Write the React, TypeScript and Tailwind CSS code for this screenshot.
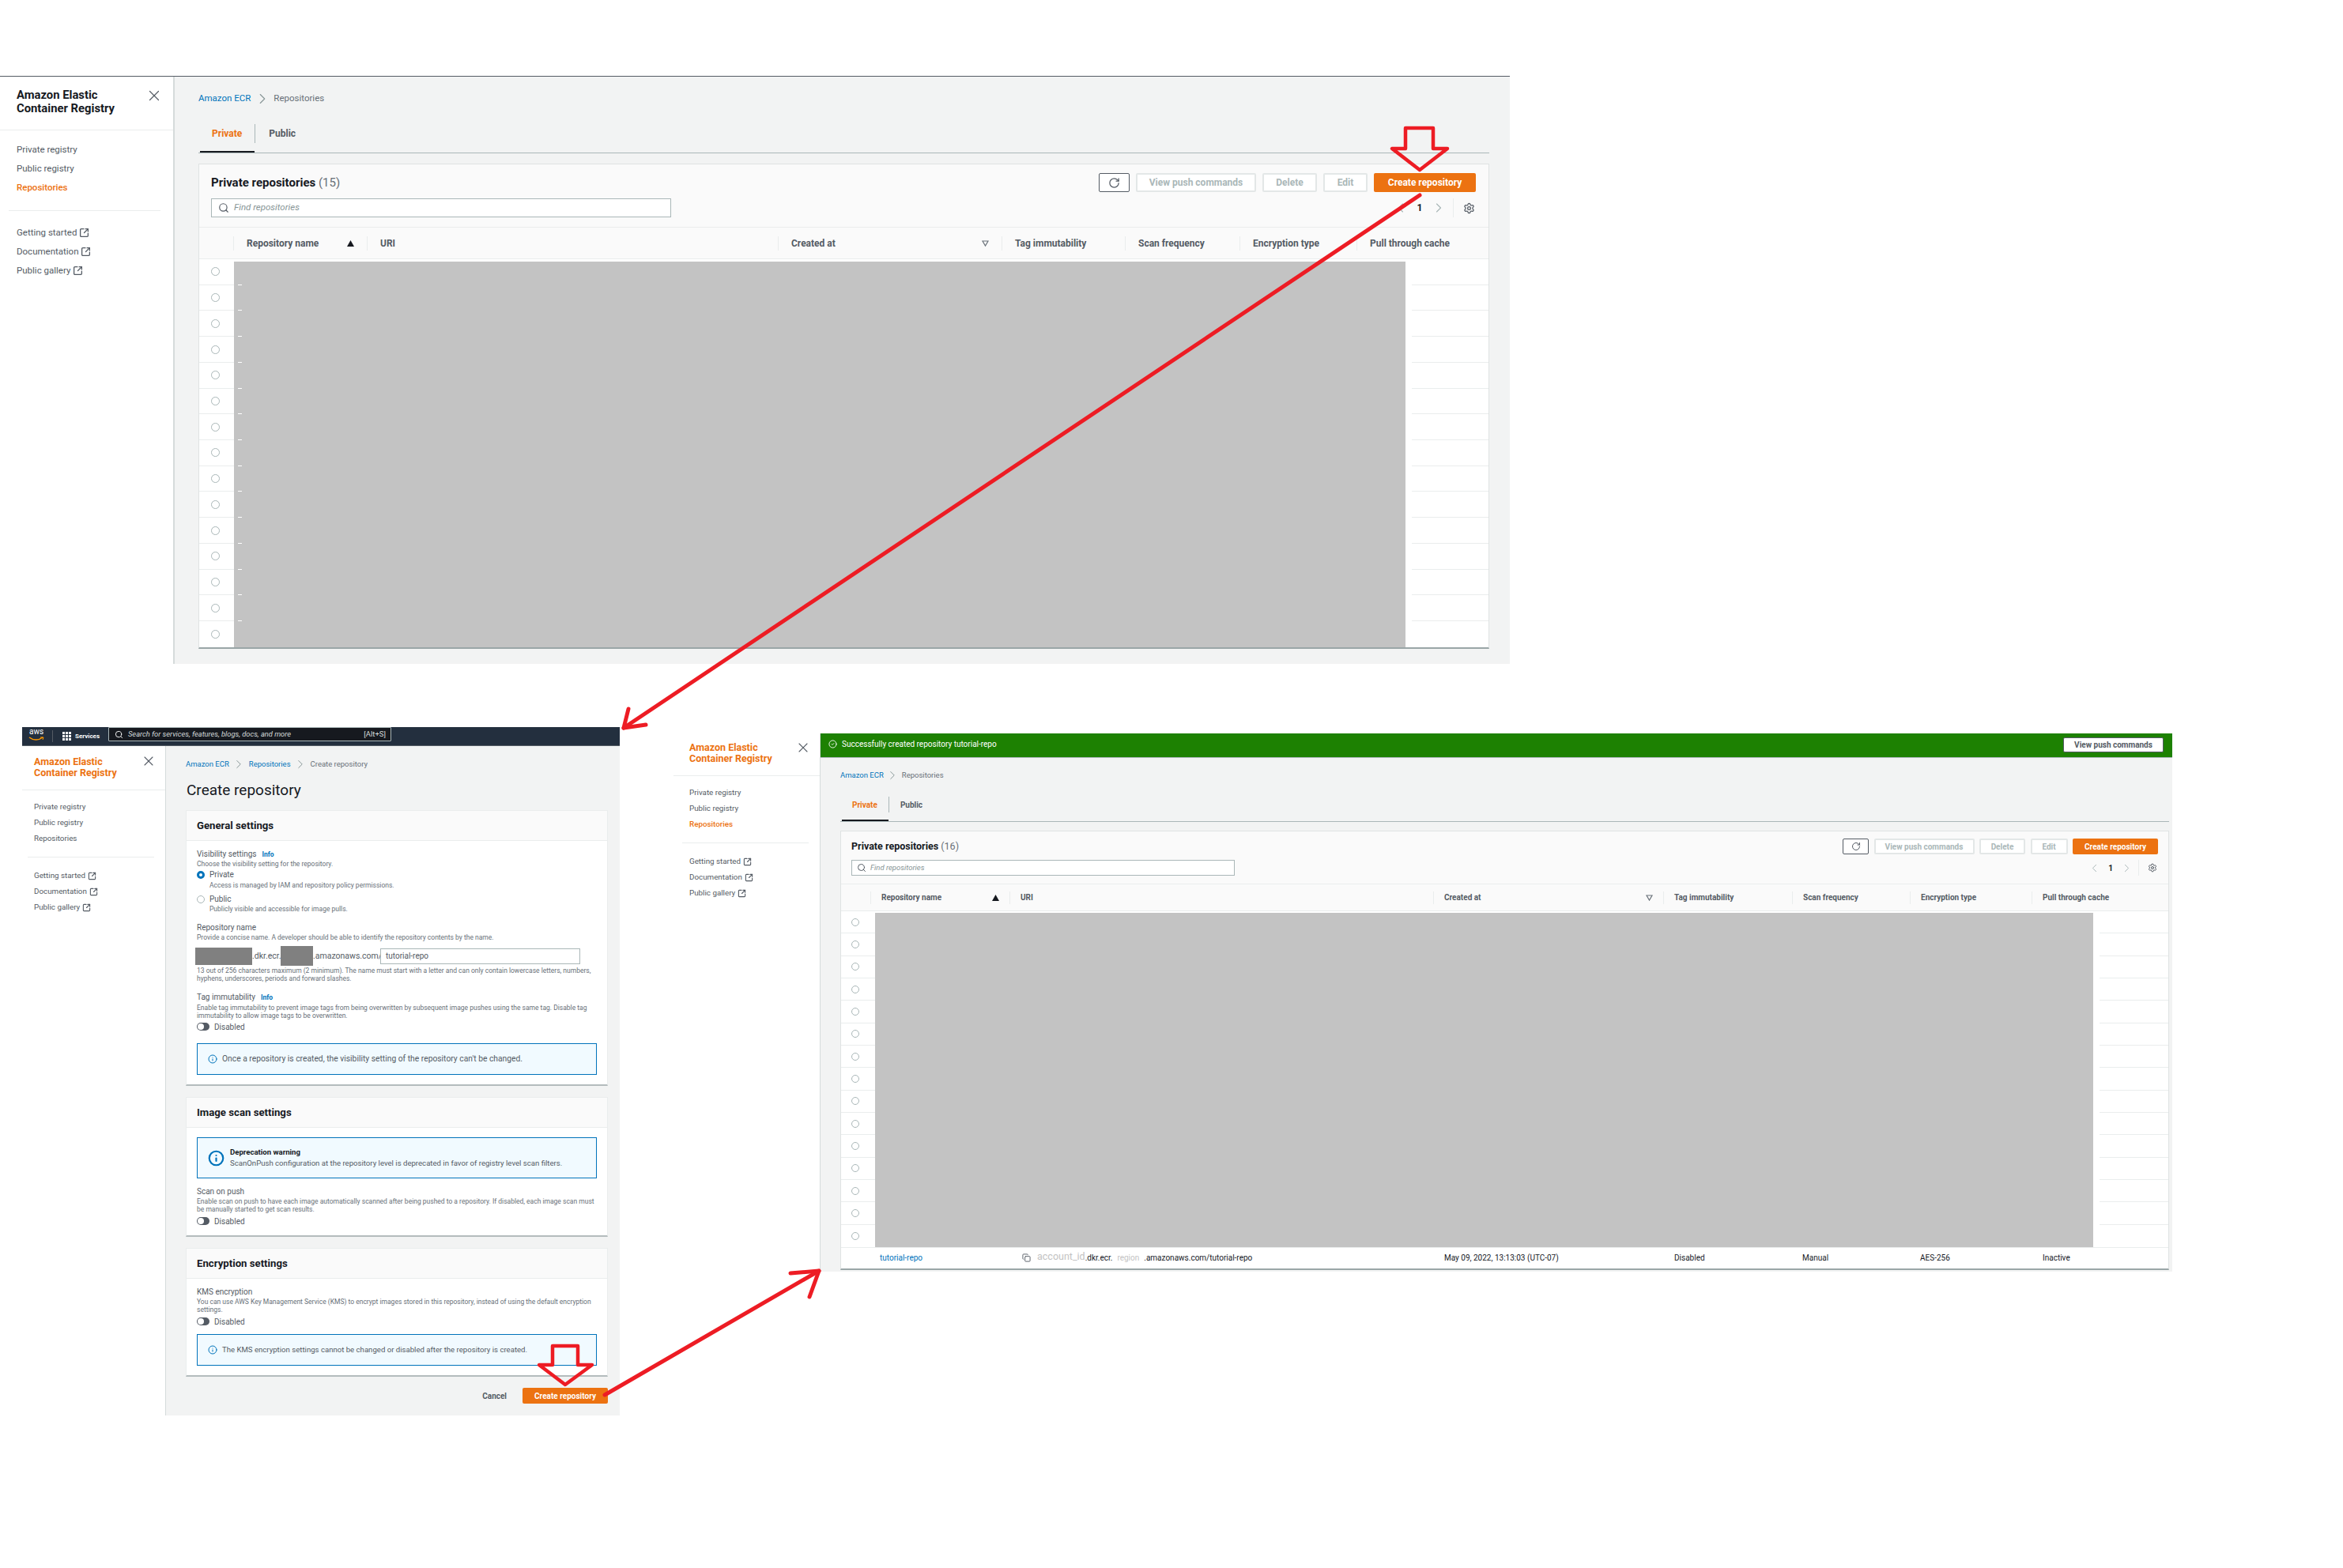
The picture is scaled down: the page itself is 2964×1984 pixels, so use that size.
import React from "react";
import clsx from "clsx";
import {
    ChevronLeft,
    ChevronRight,
    CircleCheck,
    Copy,
    Info,
    RotateCw,
    Search,
    Settings,
    SquareArrowOutUpRight,
    X,
} from "lucide-react";

type SidebarProps = {
    wrap: string;
    title: string;
    titleBlock: string;
    close: number;
    closeClass: string;
    navBlock: string;
    item: string;
    rule: string;
    linkBlock: string;
    icon: number;
    active: boolean;
};

const Sidebar = ({
    wrap,
    title,
    titleBlock,
    close,
    closeClass,
    navBlock,
    item,
    rule,
    linkBlock,
    icon,
    active,
}: SidebarProps) => {
    return (
        <div className={clsx("shrink-0", wrap)}>
            <div className={clsx("flex justify-between border-b border-[#eaeded]", titleBlock)}>
                <div className={clsx("font-bold", title)}>
                    <div>Amazon Elastic</div>
                    <div>Container Registry</div>
                </div>
                <X size={close} strokeWidth={1.3} className={clsx("text-[#545b64]", closeClass)} />
            </div>
            <div className={navBlock}>
                <div className={clsx("text-[#545b64]", item)}>Private registry</div>
                <div className={clsx("text-[#545b64]", item)}>Public registry</div>
                <div className={clsx(item, active ? "text-[#ec7211] font-medium" : "text-[#545b64]")}>Repositories</div>
            </div>
            <div className={clsx("h-px bg-[#eaeded]", rule)} />
            <div className={linkBlock}>
                {["Getting started", "Documentation", "Public gallery"].map((label) => (
                    <div key={label} className={clsx("flex items-center gap-[3px] text-[#545b64]", item)}>
                        {label}
                        <SquareArrowOutUpRight size={icon} strokeWidth={2.4} className="text-[#545b64]" />
                    </div>
                ))}
            </div>
        </div>
    );
};

type Column = { label: string; width: string; filter?: "asc" | "caret" };

type Variant = {
    head: string;
    title: string;
    search: string;
    searchIcon: number;
    searchText: string;
    btnRow: string;
    btn: string;
    widths: string[];
    pagerRow: string;
    pagerIcon: number;
    pagerOne: string;
    pagerPrev: string;
    pagerNext: string;
    pagerRule: string;
    pagerGear: string;
    gear: number;
    thead: string;
    firstCol: string;
    th: string;
    thRule: string;
    columns: Column[];
    leftCol: string;
    radioCell: string;
    row: string;
    radio: string;
    gray: string;
    grayInner: string;
    rightCol: string;
};

const bigVariant: Variant = {
    head: "pl-[15px] pr-[16px] pt-[11px] pb-[12px]",
    title: "text-[15px] leading-[24px]",
    search: "w-[582px] h-[24px] mt-[8px] pl-[8px] gap-[6px]",
    searchIcon: 14,
    searchText: "text-[11.5px]",
    btnRow: "gap-[8px] h-[24px]",
    btn: "text-[12px]",
    widths: ["w-[39px]", "w-[152px]", "w-[69px]", "w-[56px]", "w-[129px]"],
    pagerRow: "mt-[8px] h-[24px] pr-[1px]",
    pagerIcon: 20,
    pagerOne: "ml-[9px] w-[10px] text-[12px]",
    pagerPrev: "",
    pagerNext: "ml-[9px]",
    pagerRule: "ml-[8px] h-[24px]",
    pagerGear: "ml-[12px]",
    gear: 15,
    thead: "h-[40px]",
    firstCol: "w-[43px]",
    th: "h-[18px] pl-[16px] text-[12px]",
    thRule: "pr-[16px]",
    columns: [
        { label: "Repository name", width: "w-[169px]", filter: "asc" },
        { label: "URI", width: "w-[520px]" },
        { label: "Created at", width: "w-[283px]", filter: "caret" },
        { label: "Tag immutability", width: "w-[156px]" },
        { label: "Scan frequency", width: "w-[145px]" },
        { label: "Encryption type", width: "w-[148px]" },
        { label: "Pull through cache", width: "w-[167px]" },
    ],
    leftCol: "w-[44px]",
    radioCell: "pl-[15px]",
    row: "h-[32.73px]",
    radio: "size-[11px]",
    gray: "w-[1482px] mt-[3px]",
    grayInner: "-mt-[3px]",
    rightCol: "ml-[8px]",
};

const smallVariant: Variant = {
    head: "pl-[13px] pr-[13px] pt-[9px] pb-[10px]",
    title: "text-[12.5px] leading-[20px]",
    search: "w-[485px] h-[20px] mt-[7px] pl-[6px] gap-[5px]",
    searchIcon: 12,
    searchText: "text-[9.5px]",
    btnRow: "gap-[6.5px] h-[20px]",
    btn: "text-[10px]",
    widths: ["w-[33px]", "w-[127px]", "w-[58px]", "w-[47px]", "w-[108px]"],
    pagerRow: "mt-[7px] h-[20px] pr-[1px]",
    pagerIcon: 17,
    pagerOne: "ml-[8px] w-[8px] text-[10px]",
    pagerPrev: "",
    pagerNext: "ml-[8px]",
    pagerRule: "ml-[6px] h-[20px]",
    pagerGear: "ml-[11px]",
    gear: 12,
    thead: "h-[34px]",
    firstCol: "w-[37px]",
    th: "h-[16px] pl-[13px] text-[10px]",
    thRule: "pr-[13px]",
    columns: [
        { label: "Repository name", width: "w-[176px]", filter: "asc" },
        { label: "URI", width: "w-[536px]" },
        { label: "Created at", width: "w-[291px]", filter: "caret" },
        { label: "Tag immutability", width: "w-[163px]" },
        { label: "Scan frequency", width: "w-[149px]" },
        { label: "Encryption type", width: "w-[154px]" },
        { label: "Pull through cache", width: "w-[172px]" },
    ],
    leftCol: "w-[43px]",
    radioCell: "pl-[13px]",
    row: "h-[28.33px]",
    radio: "size-[10px]",
    gray: "w-[1541px] mt-[2px]",
    grayInner: "-mt-[2px]",
    rightCol: "ml-[8px]",
};

const Radio = ({ className }: { className: string }) => (
    <div className={clsx("rounded-full border border-[#aab7b8] bg-white shrink-0", className)} />
);

const rowKeys = Array.from({ length: 15 }, (_, i) => i);

const RepoPanel = ({
    v,
    count,
    ticks,
    lastRow,
}: {
    v: Variant;
    count: number;
    ticks?: boolean;
    lastRow?: React.ReactNode;
}) => {
    const labels = ["", "View push commands", "Delete", "Edit"];

    return (
        <div className="border-x border-t border-[#dfe3e3] border-b-2 border-b-[#9aa6a7] bg-white">
            <div className={clsx("flex justify-between bg-[#fafafa] border-b border-[#eaeded]", v.head)}>
                <div>
                    <div className={clsx("font-bold text-[#16191f]", v.title)}>
                        Private repositories <span className="font-normal text-[#687078]">({count})</span>
                    </div>
                    <div className={clsx("flex items-center bg-white border border-[#aab7b8]", v.search)}>
                        <Search size={v.searchIcon} className="text-[#545b64]" />
                        <span className={clsx("italic text-[#879596]", v.searchText)}>Find repositories</span>
                    </div>
                </div>
                <div>
                    <div className={clsx("flex items-stretch", v.btnRow)}>
                        {labels.map((label, i) => (
                            <div
                                key={i}
                                className={clsx(
                                    "flex items-center justify-center bg-white rounded-[2px] font-bold",
                                    v.btn,
                                    v.widths[i],
                                    i === 0 ? "border border-[#545b64] text-[#545b64]" : "border-2 border-[#e3e7e7] text-[#aab7b8]"
                                )}
                            >
                                {i === 0 ? <RotateCw size={v.gear} /> : label}
                            </div>
                        ))}
                        <div className={clsx("flex items-center justify-center bg-[#ec7211] rounded-[2px] font-bold text-white", v.btn, v.widths[4])}>
                            Create repository
                        </div>
                    </div>
                    <div className={clsx("flex items-center justify-end", v.pagerRow)}>
                        <ChevronLeft size={v.pagerIcon} strokeWidth={1.4} className={clsx("text-[#aab7b8]", v.pagerPrev)} />
                        <span className={clsx("text-center font-bold text-[#16191f]", v.pagerOne)}>1</span>
                        <ChevronRight size={v.pagerIcon} strokeWidth={1.4} className={clsx("text-[#aab7b8]", v.pagerNext)} />
                        <div className={clsx("w-px bg-[#eaeded]", v.pagerRule)} />
                        <Settings size={v.gear} className={clsx("text-[#545b64]", v.pagerGear)} />
                    </div>
                </div>
            </div>
            <div className={clsx("flex items-center bg-[#fafafa] border-b border-[#eaeded]", v.thead)}>
                <div className={v.firstCol} />
                {v.columns.map((col) => (
                    <div
                        key={col.label}
                        className={clsx(
                            "flex items-center justify-between border-l border-[#eaeded] font-bold text-[#545b64] shrink-0",
                            col.width,
                            v.th,
                            col.filter && v.thRule
                        )}
                    >
                        {col.label}
                        {col.filter === "asc" && (
                            <svg width="9" height="8" viewBox="0 0 9 8">
                                <path d="M4.5 0 9 8H0z" fill="#16191f" />
                            </svg>
                        )}
                        {col.filter === "caret" && (
                            <svg width="9" height="8" viewBox="0 0 9 8">
                                <path d="M1 1h7L4.5 7z" fill="none" stroke="#687078" strokeWidth="1.2" />
                            </svg>
                        )}
                    </div>
                ))}
            </div>
            <div className="flex">
                <div className={clsx("shrink-0", v.leftCol)}>
                    {rowKeys.map((i) => (
                        <div key={i} className={clsx("flex items-center border-b border-[#eaeded] last:border-b-0", v.radioCell, v.row)}>
                            <Radio className={v.radio} />
                        </div>
                    ))}
                </div>
                <div className={clsx("shrink-0 bg-[#c3c3c3]", v.gray)}>
                    {ticks && (
                        <div className={v.grayInner}>
                            {rowKeys.map((i) => (
                                <div key={i} className={clsx("flex items-end pl-[5px]", v.row)}>
                                    {i < 14 && <div className="w-[5px] h-px bg-white" />}
                                </div>
                            ))}
                        </div>
                    )}
                </div>
                <div className={clsx("flex-1", v.rightCol)}>
                    {rowKeys.map((i) => (
                        <div key={i} className={clsx("border-b border-[#eaeded] last:border-b-0", v.row)} />
                    ))}
                </div>
            </div>
            {lastRow}
        </div>
    );
};

const Toggle = ({ className }: { className?: string }) => (
    <div className={clsx("flex items-center gap-[6px] h-[12px] text-[10px] text-[#545b64]", className)}>
        <div className="w-[16px] h-[10px] rounded-full bg-[#545b64] flex items-center pl-[1px]">
            <div className="size-[8px] rounded-full bg-white" />
        </div>
        Disabled
    </div>
);

const Note = ({ children, className }: { children: React.ReactNode; className: string }) => (
    <div className={clsx("border border-[#0073bb] bg-[#f1faff]", className)}>{children}</div>
);

const FormCard = ({ title, body, children }: { title: string; body: string; children: React.ReactNode }) => (
    <div className="border-x border-t border-[#eaeded] border-b-2 border-b-[#b4bcbd] bg-white">
        <div className="h-[38px] flex items-center pl-[13px] bg-[#fafafa] border-b border-[#eaeded] text-[13.2px] font-bold text-[#16191f]">
            {title}
        </div>
        <div className={body}>{children}</div>
    </div>
);

const labelText = "h-[12px] leading-[12px] text-[10px] text-[#545b64]";
const hintText = "leading-[10px] text-[8.5px] text-[#687078]";

const CreateForm = () => (
    <div className="flex-1 bg-[#f2f3f3] border-l border-[#d5dbdb] pl-[25px] pr-[15px] pt-[16px] pb-[15px]">
        <div className="flex items-center h-[14px] text-[9.5px]">
            <span className="text-[#0073bb]">Amazon ECR</span>
            <ChevronRight size={18} strokeWidth={1.3} className="mx-[3.5px] text-[#879596]" />
            <span className="text-[#0073bb]">Repositories</span>
            <ChevronRight size={18} strokeWidth={1.3} className="mx-[3.5px] text-[#879596]" />
            <span className="text-[#687078]">Create repository</span>
        </div>
        <div className="mt-[12px] pl-[1px] h-[28px] leading-[28px] text-[19px] text-[#16191f]">Create repository</div>
        <div className="mt-[11px] flex flex-col gap-[14px]">
            <FormCard title="General settings" body="px-[13px] pt-[11px] pb-[12px]">
                <div className={clsx("flex items-center gap-[7px]", labelText)}>
                    Visibility settings
                    <span className="text-[8.5px] font-bold text-[#0073bb]">Info</span>
                </div>
                <div className={clsx("mt-[1px]", hintText)}>Choose the visibility setting for the repository.</div>
                <div className={clsx("mt-[3px] flex items-center gap-[6px]", labelText)}>
                    <div className="size-[10px] rounded-full border-[3px] border-[#0073bb] bg-white" />
                    Private
                </div>
                <div className={clsx("mt-[2px] pl-[16px]", hintText)}>Access is managed by IAM and repository policy permissions.</div>
                <div className={clsx("mt-[7px] flex items-center gap-[6px]", labelText)}>
                    <Radio className="size-[10px]" />
                    Public
                </div>
                <div className={clsx("mt-[1px] pl-[16px]", hintText)}>Publicly visible and accessible for image pulls.</div>
                <div className={clsx("mt-[13px]", labelText)}>Repository name</div>
                <div className={clsx("mt-[1px]", hintText)}>Provide a concise name. A developer should be able to identify the repository contents by the name.</div>
                <div className="mt-[6px] h-[25px] -ml-[2px] flex items-center text-[10.5px] text-[#545b64] whitespace-nowrap">
                    <div className="w-[72px] h-[22px] bg-[#808080]" />
                    <span className="w-[36px] text-center">.dkr.ecr.</span>
                    <div className="w-[41px] h-[25px] bg-[#808080]" />
                    <span className="w-[85px] text-center">.amazonaws.com/</span>
                    <div className="w-[253px] h-[20px] flex items-center pl-[6px] bg-white border border-[#aab7b8] text-[10px]">tutorial-repo</div>
                </div>
                <div className={clsx("mt-[1px]", hintText)}>
                    13 out of 256 characters maximum (2 minimum). The name must start with a letter and can only contain lowercase letters, numbers, hyphens, underscores, periods and forward slashes.
                </div>
                <div className={clsx("mt-[13px] flex items-center gap-[7px]", labelText)}>
                    Tag immutability
                    <span className="text-[8.5px] font-bold text-[#0073bb]">Info</span>
                </div>
                <div className={clsx("mt-[2px]", hintText)}>
                    Enable tag immutability to prevent image tags from being overwritten by subsequent image pushes using the same tag. Disable tag immutability to allow image tags to be overwritten.
                </div>
                <Toggle className="mt-[3px]" />
                <Note className="mt-[15px] h-[40px] flex items-center gap-[6px] pl-[13px] text-[10.3px] text-[#545b64]">
                    <Info size={12} className="text-[#0073bb]" />
                    Once a repository is created, the visibility setting of the repository can't be changed.
                </Note>
            </FormCard>
            <FormCard title="Image scan settings" body="px-[13px] pt-[12px] pb-[12px]">
                <Note className="h-[52px] flex items-center gap-[7px] pl-[13px]">
                    <Info size={21} strokeWidth={2.5} className="text-[#0073bb]" />
                    <div className="text-[#545b64]">
                        <div className="text-[9.6px] leading-[14px] font-bold text-[#16191f]">Deprecation warning</div>
                        <div className="text-[9.6px] leading-[14px]">ScanOnPush configuration at the repository level is deprecated in favor of registry level scan filters.</div>
                    </div>
                </Note>
                <div className={clsx("mt-[11px]", labelText)}>Scan on push</div>
                <div className={clsx("mt-[1px]", hintText)}>
                    Enable scan on push to have each image automatically scanned after being pushed to a repository. If disabled, each image scan must be manually started to get scan results.
                </div>
                <Toggle className="mt-[4px]" />
            </FormCard>
            <FormCard title="Encryption settings" body="px-[13px] pt-[11px] pb-[12px]">
                <div className={labelText}>KMS encryption</div>
                <div className={clsx("mt-[1px]", hintText)}>
                    You can use AWS Key Management Service (KMS) to encrypt images stored in this repository, instead of using the default encryption settings.
                </div>
                <Toggle className="mt-[4px]" />
                <Note className="mt-[10px] h-[40px] flex items-center gap-[6px] pl-[13px] text-[9.6px] text-[#545b64]">
                    <Info size={12} className="text-[#0073bb]" />
                    The KMS encryption settings cannot be changed or disabled after the repository is created.
                </Note>
            </FormCard>
        </div>
        <div className="mt-[14px] flex items-center justify-end">
            <span className="text-[10px] font-bold text-[#545b64] mr-[20px]">Cancel</span>
            <div className="w-[108px] h-[20px] flex items-center justify-center rounded-[2px] bg-[#ec7211] text-[10px] font-bold text-white">
                Create repository
            </div>
        </div>
    </div>
);

const TopBar = () => (
    <div className="h-[24px] bg-[#232f3e] border-b border-[#545b64] flex items-start pl-[7px]">
        <div className="w-[22px] h-[23px] flex flex-col items-center">
            <span className="text-[10px] leading-[12px] text-white">aws</span>
            <svg width="20" height="6" viewBox="0 0 20 6">
                <path d="M1 1c5 4 12 4 17 0" fill="none" stroke="#ff9900" strokeWidth="1.5" />
                <path d="M15 1h4l-1 3" fill="none" stroke="#ff9900" strokeWidth="1" />
            </svg>
        </div>
        <div className="ml-[9px] w-px h-[15px] mt-[4px] bg-[#545b64]" />
        <svg width="11" height="11" viewBox="0 0 11 11" className="ml-[12px] mt-[6px]" fill="#fff">
            <rect x="0" y="0" width="3" height="3" />
            <rect x="4" y="0" width="3" height="3" />
            <rect x="8" y="0" width="3" height="3" />
            <rect x="0" y="4" width="3" height="3" />
            <rect x="4" y="4" width="3" height="3" />
            <rect x="8" y="4" width="3" height="3" />
            <rect x="0" y="8" width="3" height="3" />
            <rect x="4" y="8" width="3" height="3" />
            <rect x="8" y="8" width="3" height="3" />
        </svg>
        <span className="ml-[5px] w-[30px] h-[23px] leading-[23px] text-[8px] font-bold text-white">Services</span>
        <div className="ml-[12px] w-[358px] h-[18px] flex items-center justify-between pl-[7px] pr-[6px] bg-[#16191f] border border-[#aab7b8] rounded-b-[1px]">
            <div className="flex items-center gap-[6px]">
                <Search size={11} className="text-white" />
                <span className="text-[9.3px] italic text-[#d5dbdb]">Search for services, features, blogs, docs, and more</span>
            </div>
            <span className="text-[9.5px] text-[#d5dbdb]">[Alt+S]</span>
        </div>
    </div>
);

const LastRepoRow = () => (
    <div className="h-[27px] flex items-center border-t border-[#eaeded] text-[10px] text-[#16191f]">
        <div className="w-[37px]" />
        <div className="w-[176px] pl-[12px] text-[#0073bb]">tutorial-repo</div>
        <div className="w-[536px] pl-[16px] flex items-center">
            <Copy size={11} className="text-[#545b64] mr-[8px]" />
            <span className="text-[12.5px] -mt-[4px] text-[#c3c3c3]">account_id</span>
            <span>.dkr.ecr.</span>
            <span className="mx-[6px] text-[#c3c3c3]">region</span>
            <span>.amazonaws.com/tutorial-repo</span>
        </div>
        <div className="w-[291px] pl-[14px]">May 09, 2022, 13:13:03 (UTC-07)</div>
        <div className="w-[163px] pl-[14px]">Disabled</div>
        <div className="w-[149px] pl-[13px]">Manual</div>
        <div className="w-[154px] pl-[13px]">AES-256</div>
        <div className="pl-[14px]">Inactive</div>
    </div>
);

const Arrows = () => (
    <svg className="absolute inset-0 pointer-events-none" width="2964" height="1984" viewBox="0 0 2964 1984" fill="none" stroke="#ed1c24" strokeWidth="4.5" strokeLinejoin="round" strokeLinecap="round">
        <path d="M1778 162H1813V188H1831L1796 215L1761 188H1778Z" />
        <path d="M699 1703H731V1727H749L715 1752L682 1727H699Z" />
        <path d="M1796 247L789 921" strokeWidth="5" />
        <path d="M795 897L789 921L817 917" strokeWidth="5" />
        <path d="M765 1765L1036 1608" strokeWidth="5" />
        <path d="M1000 1611L1036 1608L1024 1641" strokeWidth="5" />
    </svg>
);

export default function App() {
    return (
        <div className="relative w-[2964px] h-[1984px] overflow-hidden bg-white font-['Roboto',sans-serif]">
            {/* first screenshot */}
            <div className="absolute left-0 top-[96px] w-[1910px] h-[744px] flex border-t border-[#545b64]">
                <Sidebar
                    wrap="w-[219px]"
                    title="text-[14.8px] leading-[17px] text-[#16191f]"
                    titleBlock="h-[68px] pl-[21px] pr-[13px] pt-[15px]"
                    close={22}
                    closeClass="-mt-[2px]"
                    navBlock="pt-[12px] pb-[17px] pl-[21px]"
                    item="h-[24px] leading-[24px] text-[11.5px]"
                    rule="ml-[11px] mr-[16px]"
                    linkBlock="pt-[15px] pl-[21px]"
                    icon={13}
                    active
                />
                <div className="flex-1 bg-[#f2f3f3] border-l-2 border-[#d5dbdb] pl-[30px] pr-[26px] pt-[20px]">
                    <div className="flex items-center h-[16px] text-[11.5px]">
                        <span className="text-[#0073bb]">Amazon ECR</span>
                        <ChevronRight size={22} strokeWidth={1.2} className="mx-[3.5px] text-[#879596]" />
                        <span className="text-[#687078]">Repositories</span>
                    </div>
                    <div className="mt-[12px] flex items-center border-b border-[#aab7b8] text-[12px] font-bold">
                        <div className="ml-[2px] h-[48px] pl-[15px] pr-[16px] pt-[2px] flex items-center border-b-2 border-[#16191f] text-[#ec7211]">Private</div>
                        <div className="w-px h-[24px] bg-[#aab7b8]" />
                        <div className="pl-[17px] text-[#545b64]">Public</div>
                    </div>
                    <div className="mt-[13px]">
                        <RepoPanel v={bigVariant} count={15} ticks />
                    </div>
                </div>
            </div>

            {/* second screenshot */}
            <div className="absolute left-[28px] top-[920px] w-[756px] h-[871px] flex flex-col">
                <TopBar />
                <div className="flex-1 flex">
                    <Sidebar
                        wrap="w-[181px]"
                        title="text-[12.5px] leading-[14px] text-[#ec7211]"
                        titleBlock="h-[56px] pl-[15px] pr-[11px] pt-[13px]"
                        close={20}
                        closeClass="-mt-[4px]"
                        navBlock="pt-[11px] pb-[13px] pl-[15px]"
                        item="h-[20px] leading-[20px] text-[9.8px]"
                        rule="ml-[7px] mr-[14px]"
                        linkBlock="pt-[13px] pl-[15px]"
                        icon={11}
                        active={false}
                    />
                    <CreateForm />
                </div>
            </div>

            {/* third screenshot */}
            <div className="absolute left-[852px] top-[928px] w-[1896px] h-[681px] flex">
                <Sidebar
                    wrap="w-[185px]"
                    title="text-[12.5px] leading-[14px] text-[#ec7211]"
                    titleBlock="h-[54px] pl-[20px] pr-[11px] pt-[11px]"
                    close={20}
                    closeClass="-mt-[3px]"
                    navBlock="pt-[11px] pb-[13px] pl-[20px]"
                    item="h-[20px] leading-[20px] text-[9.8px]"
                    rule="ml-[11px] mr-[14px]"
                    linkBlock="pt-[13px] pl-[20px]"
                    icon={11}
                    active
                />
                <div className="flex-1 bg-[#f2f3f3] border-l border-[#d5dbdb]">
                    <div className="h-[31px] flex items-start justify-between pl-[10px] pr-[11px] bg-[#1d8102] border-b border-[#aab7b8]">
                        <div className="flex items-center gap-[6px] h-[27px] text-[10px] text-white">
                            <CircleCheck size={11} />
                            Successfully created repository tutorial-repo
                        </div>
                        <div className="mt-[5px] w-[127px] h-[19px] flex items-center justify-center bg-white border border-[#545b64] rounded-[2px] text-[10px] font-bold text-[#545b64]">
                            View push commands
                        </div>
                    </div>
                    <div className="pl-[25px] pr-[4px] pt-[15px]">
                        <div className="flex items-center h-[14px] text-[9.5px]">
                            <span className="text-[#0073bb]">Amazon ECR</span>
                            <ChevronRight size={18} strokeWidth={1.3} className="mx-[2.5px] text-[#879596]" />
                            <span className="text-[#687078]">Repositories</span>
                        </div>
                        <div className="mt-[9px] flex items-center border-b border-[#aab7b8] text-[10px] font-bold">
                            <div className="ml-[2px] h-[42px] pl-[13px] pr-[14px] pt-[2px] flex items-center border-b-2 border-[#16191f] text-[#ec7211]">Private</div>
                            <div className="w-px h-[20px] bg-[#aab7b8]" />
                            <div className="pl-[14px] text-[#545b64]">Public</div>
                        </div>
                        <div className="mt-[11px]">
                            <RepoPanel v={smallVariant} count={16} lastRow={<LastRepoRow />} />
                        </div>
                    </div>
                </div>
            </div>

            <Arrows />
        </div>
    );
}
